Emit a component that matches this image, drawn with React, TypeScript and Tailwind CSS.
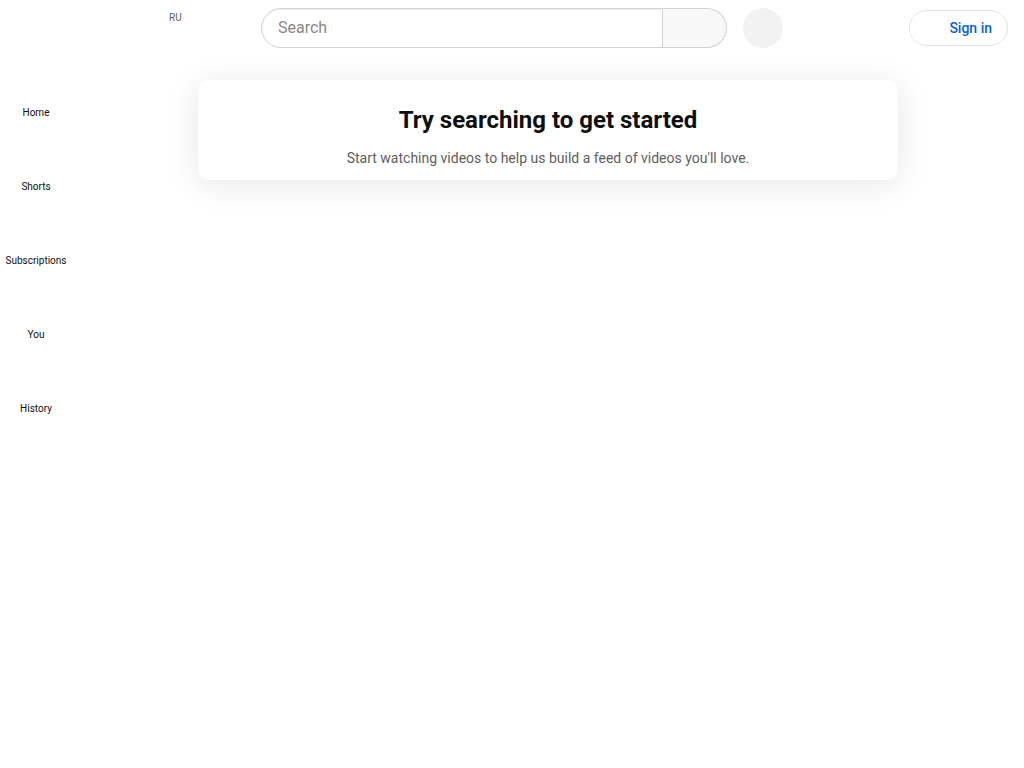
import React from 'react';

const navItems = ['Home', 'Shorts', 'Subscriptions', 'You', 'History'];

function Header() {
  return (
    <header className="flex h-14 items-center bg-white pl-4 pr-4">
      {/* Left: menu button + logo + country code (icons not rendered) */}
      <div className="flex h-full w-[245px] flex-none items-center">
        <div className="h-10 w-10 flex-none rounded-full" />
        <div className="h-5 w-[113px] flex-none" />
        <span className="-mt-[20px] text-[10px] leading-[14px] text-[#606060]">RU</span>
      </div>

      {/* Center: search */}
      <div className="flex flex-none items-center">
        <div className="flex h-10 w-[402px] items-center rounded-l-full border border-[#d3d3d3] pl-4 shadow-[inset_0_1px_2px_#eeeeee]">
          <span className="text-base text-[#888888]">Search</span>
        </div>
        <div className="h-10 w-16 rounded-r-full border border-l-0 border-[#d3d3d3] bg-[#f8f8f8]" />
        <div className="ml-4 h-10 w-10 rounded-full bg-[#f2f2f2]" />
      </div>

      <div className="flex-1" />

      {/* Right: sign in */}
      <button className="flex h-9 items-center rounded-full border border-[#e5e5e5] pl-[9px] pr-[15px]">
        <span className="h-6 w-6 flex-none" />
        <span className="ml-[6px] text-sm font-medium text-[#065fd4]">Sign in</span>
      </button>
    </header>
  );
}

function MiniGuide() {
  return (
    <nav className="flex w-[72px] flex-none flex-col pt-1">
      {navItems.map((label) => (
        <div key={label} className="flex h-[74px] flex-col items-center pb-[14px] pt-4">
          <div className="h-6 w-6" />
          <span className="mt-[6px] whitespace-nowrap text-[10px] leading-[14px] text-[#0f0f0f]">
            {label}
          </span>
        </div>
      ))}
    </nav>
  );
}

export default function App() {
  return (
    <div
      className="min-h-[768px] bg-white"
      style={{ fontFamily: 'Roboto, Arial, sans-serif' }}
    >
      <Header />
      <div className="flex">
        <MiniGuide />
        <main className="flex flex-1 justify-center pt-6">
          <div className="flex h-[100px] w-[700px] flex-col items-center rounded-xl bg-white pt-6 shadow-[0_4px_32px_rgba(0,0,0,0.1)]">
            <h1 className="text-2xl font-bold leading-8 text-[#0f0f0f]">Try searching to get started</h1>
            <p className="mt-3 text-sm leading-5 text-[#606060]">
              Start watching videos to help us build a feed of videos you'll love.
            </p>
          </div>
        </main>
      </div>
    </div>
  );
}
